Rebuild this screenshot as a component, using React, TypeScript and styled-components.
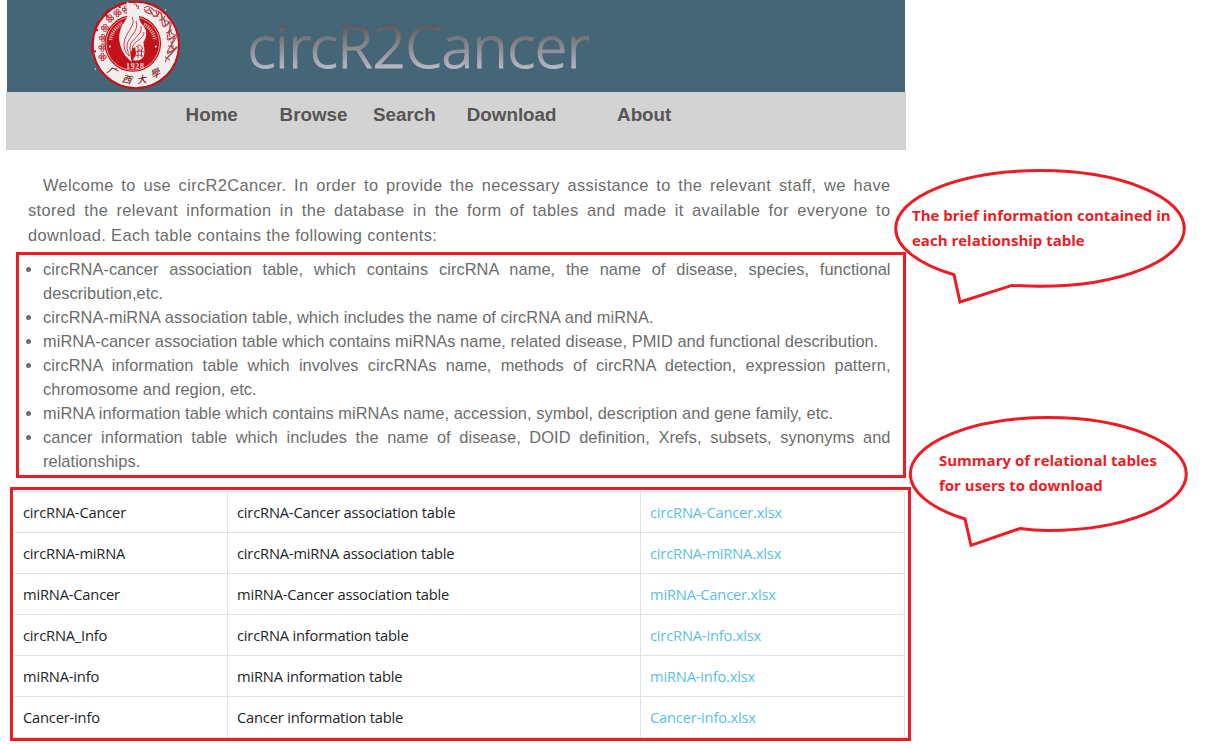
import React from "react";
import styled, { createGlobalStyle } from "styled-components";

const RED = "#ed1c24";

const GlobalStyle = createGlobalStyle`
  body {
    margin: 0;
    background: #fff;
    overflow: hidden;
  }
`;

const Page = styled.div`
  position: relative;
  box-sizing: border-box;
  width: 1207px;
  height: 744px;
  padding-left: 6px;
  background: #fff;
  overflow: hidden;
`;

const Content = styled.main`
  display: flex;
  flex-direction: column;
  width: 900px;
`;

const Banner = styled.header`
  box-sizing: border-box;
  display: flex;
  height: 92px;
  margin: 0 1px;
  padding-left: 82px;
  background: #446676;
`;

const Seal = styled.svg`
  flex: none;
  width: 96px;
  height: 92px;
`;

const SiteTitle = styled.h1`
  margin: 0 0 0 62.5px;
  height: 92px;
  font: 300 59px/90px "Noto Sans", "Open Sans", sans-serif;
  letter-spacing: -0.55px;
  white-space: nowrap;
  color: transparent;
  -webkit-text-stroke: 1px transparent;
  background: linear-gradient(#555255 22px, #bcbcc6 70px);
  background-clip: text;
  -webkit-background-clip: text;
`;

const Nav = styled.nav`
  box-sizing: border-box;
  display: flex;
  height: 58px;
  padding: 11px 0 0 179.6px;
  background: #d3d3d3;
`;

const NavItem = styled.a<{ $width: number }>`
  width: ${(p) => p.$width}px;
  font: bold 18.8px/24px "Liberation Sans", Arial, sans-serif;
  color: #575555;
`;

const Intro = styled.p`
  margin: 23px 15.5px 4px 22px;
  font: 16.4px/25px "Liberation Sans", Arial, sans-serif;
  letter-spacing: 0.38px;
  text-align: justify;
  text-indent: 15px;
  color: #6c6c6c;
`;

const DescriptionFrame = styled.section`
  margin-left: 10px;
  padding: 2px 12.5px 2px 24px;
  border: 3px solid ${RED};
`;

const TableList = styled.ul`
  margin: 0;
  padding: 0;
  list-style: none;
`;

const TableItem = styled.li`
  position: relative;
  font: 16.4px/24px "Liberation Sans", Arial, sans-serif;
  letter-spacing: 0.05px;
  text-align: justify;
  color: #6c6c6c;

  &::before {
    content: "";
    position: absolute;
    left: -17px;
    top: 10px;
    width: 5px;
    height: 5px;
    border-radius: 50%;
    background: #6c6c6c;
  }
`;

const DownloadFrame = styled.section`
  width: 894px;
  margin: 9px 0 0 4px;
  padding: 1px 0 0 1px;
  border: 3px solid ${RED};
`;

const DownloadTable = styled.div`
  width: 891px;
  border-top: 1px solid #dee2e6;
`;

const Row = styled.div`
  display: grid;
  grid-template-columns: 214px 413px 264px;
`;

const Cell = styled.div`
  box-sizing: border-box;
  height: 41px;
  padding: 0 9px;
  border-right: 1px solid #dee2e6;
  border-bottom: 1px solid #dee2e6;
  font: 14.7px/41px "Open Sans", "Noto Sans", sans-serif;
  letter-spacing: -0.19px;
  white-space: nowrap;
  color: #212529;
`;

const FileLink = styled.a`
  color: #5bc0de;
`;

const Callout = styled.aside<{ $left: number; $top: number }>`
  position: absolute;
  left: ${(p) => p.$left}px;
  top: ${(p) => p.$top}px;
  width: 300px;
  height: 140px;
`;

const Bubble = styled.svg`
  position: absolute;
  inset: 0;
  fill: none;
  stroke: ${RED};
  stroke-width: 3px;
`;

const CalloutText = styled.p<{ $indent: number }>`
  position: relative;
  margin: 0;
  padding: 38px 0 0 ${(p) => p.$indent}px;
  font: bold 15px/25px "Open Sans", "Noto Sans", sans-serif;
  white-space: nowrap;
  color: ${RED};
`;

const navItems = [
  { label: "Home", width: 94 },
  { label: "Browse", width: 93.5 },
  { label: "Search", width: 93.7 },
  { label: "Download", width: 150.3 },
  { label: "About", width: 90 },
];

const descriptions = [
  "circRNA-cancer association table, which contains circRNA name, the name of disease, species, functional describution,etc.",
  "circRNA-miRNA association table, which includes the name of circRNA and miRNA.",
  "miRNA-cancer association table which contains miRNAs name, related disease, PMID and functional describution.",
  "circRNA information table which involves circRNAs name, methods of circRNA detection, expression pattern, chromosome and region, etc.",
  "miRNA information table which contains miRNAs name, accession, symbol, description and gene family, etc.",
  "cancer information table which includes the name of disease, DOID definition, Xrefs, subsets, synonyms and relationships.",
];

const downloads = [
  ["circRNA-Cancer", "circRNA-Cancer association table", "circRNA-Cancer.xlsx"],
  ["circRNA-miRNA", "circRNA-miRNA association table", "circRNA-miRNA.xlsx"],
  ["miRNA-Cancer", "miRNA-Cancer association table", "miRNA-Cancer.xlsx"],
  ["circRNA_Info", "circRNA information table", "circRNA-info.xlsx"],
  ["miRNA-info", "miRNA information table", "miRNA-info.xlsx"],
  ["Cancer-info", "Cancer information table", "Cancer-info.xlsx"],
];

const flowers = [
  [13.5, 57], [13.5, 47.5], [14, 38], [16, 28], [21, 18.5], [28.5, 13], [37, 9.5], [46, 7.5],
];

const sealCharacters = [
  { char: "广", x: 24.5, y: 71, turn: 28 },
  { char: "西", x: 39, y: 79, turn: 12 },
  { char: "大", x: 53.5, y: 79, turn: -10 },
  { char: "學", x: 67, y: 72.5, turn: -28 },
];

function UniversitySeal() {
  const red = "#c4121a";
  return (
    <Seal viewBox="0 0 96 92">
      <circle cx="46.8" cy="45" r="44.3" fill={red} />
      <circle cx="46.8" cy="45" r="42.2" fill="#f3eeee" />
      <path d="M35 3 30 5l1 3M20 9l-4 5 3 3M9 22l-3 7 3 1.5M4.5 37l-1.5 14 4 .5" fill="none" stroke={red} strokeWidth="2" />
      {flowers.map(([x, y]) => (
        <g key={`${x}-${y}`} transform={`translate(${x} ${y})`} fill="none" stroke="#c2454b" strokeWidth="1.1">
          <circle cx="0" cy="-2.3" r="1.4" />
          <circle cx="0" cy="2.3" r="1.4" />
          <circle cx="-2.3" cy="0" r="1.4" />
          <circle cx="2.3" cy="0" r="1.4" />
        </g>
      ))}
      <g fill="none" stroke="#b9474b" strokeWidth="1.1">
        <path d="M55 8q4-3 7 0t6 3 5 5 5 5 3 6 3 7 0 7 0 7-3 7-4 7" />
        <path d="M56 12q5-5 7 1t6 1 4 6 6 4 1 7 4 6-1 7 1 6-5 7" />
        <path d="M55 9q2 5 8 5M64 16q5 2 6-4M70 20q5 0 6-4M74 26q4 1 6-5M77 33q4-1 6-3M79 39l6-1M79 46l6 0M78 51l6 2M76 57l5 3" />
        <path d="M60 8l3 6M67 11l2 6M75 20l2 6M80 30l1 7M82 41l1 8" />
      </g>
      <circle cx="43.8" cy="43.5" r="28.3" fill={red} />
      <circle cx="43.8" cy="43.5" r="26.7" fill="none" stroke="#efd2d3" strokeWidth=".7" />
      <g fill="none" stroke="#e3a3a5" strokeWidth="3.6" strokeDasharray="1.3 .9">
        <path d="M21.5 40A22.5 22.5 0 0 1 34 23" />
        <path d="M55 24A22.5 22.5 0 0 1 66 40" />
      </g>
      <g fill="#f3eeee">
        <circle cx="20.8" cy="46.5" r="1" />
        <circle cx="66.8" cy="46.5" r="1" />
        <path d="M38 2C36 10 41 15 36 21C31 28 29 35 31 44C33 53 38 58 43 62C41 56 41 52 44 48L50 46C56 42 58 37 57 31C56 26 51 24 50 18C50 13 49 8 46 5Z" />
        <path d="M46 45l8-4c1 5 2 9 1 15q-4 6-11 4l3-6z" />
      </g>
      <g fill="none" stroke={red} strokeWidth=".8">
        <path d="M43 17c5 9-8 16-8 27 0 6 2 9 5 12M47 21c4 11-9 16-9 25 0 4 1 7 3 10M52 26c2 10-11 13-11 21 0 3 0 5 1 7M55 32c0 8-11 8-12 17" />
        <path d="M47 47q4-4 6 0t-4 3M46 52q4-2 9 0M46 56q4-2 8 0M49 46v12M52.5 49v8" />
      </g>
      <text x="46.3" y="69" textAnchor="middle" fontFamily="Liberation Serif, serif" fontSize="8" fontWeight="bold" letterSpacing=".6" fill="#f6dede">1928</text>
      {sealCharacters.map(({ char, x, y, turn }) => (
        <text key={char} transform={`translate(${x} ${y}) rotate(${turn}) skewX(-14)`} textAnchor="middle" dominantBaseline="central" fontFamily="Noto Sans CJK SC, sans-serif" fontSize="9.5" fontWeight="500" fill="#7e1f22">
          {char}
        </text>
      ))}
      <circle cx="6.3" cy="69" r=".8" fill="#e6eaec" />
      <circle cx="76.3" cy="10" r=".8" fill="#e6eaec" />
    </Seal>
  );
}

export default function App() {
  return (
    <Page>
      <GlobalStyle />
      <Content>
        <Banner>
          <UniversitySeal />
          <SiteTitle>circR2Cancer</SiteTitle>
        </Banner>
        <Nav>
          {navItems.map((item) => (
            <NavItem key={item.label} $width={item.width}>{item.label}</NavItem>
          ))}
        </Nav>
        <Intro>
          Welcome to use circR2Cancer. In order to provide the necessary assistance to the relevant staff, we have
          stored the relevant information in the database in the form of tables and made it available for everyone to
          download. Each table contains the following contents:
        </Intro>
        <DescriptionFrame>
          <TableList>
            {descriptions.map((text) => (
              <TableItem key={text}>{text}</TableItem>
            ))}
          </TableList>
        </DescriptionFrame>
        <DownloadFrame>
          <DownloadTable>
            {downloads.map(([name, summary, file]) => (
              <Row key={name}>
                <Cell>{name}</Cell>
                <Cell>{summary}</Cell>
                <Cell><FileLink>{file}</FileLink></Cell>
              </Row>
            ))}
          </DownloadTable>
        </DownloadFrame>
      </Content>
      <Callout $left={890} $top={165}>
        <Bubble width="300" height="140" viewBox="890 165 300 140">
          <path d="M954 274.8A144.3 57.8 0 0 1 895.7 228.4A144.3 57.8 0 0 1 1040 170.6A144.3 57.8 0 0 1 1184.3 228.4A144.3 57.8 0 0 1 1040 286.2Q1026 286.2 1012 285.4L960 302Z" />
        </Bubble>
        <CalloutText $indent={22}>
          The brief information contained in
          <br />
          each relationship table
        </CalloutText>
      </Callout>
      <Callout $left={890} $top={410}>
        <Bubble width="300" height="140" viewBox="890 410 300 140">
          <path d="M965 519A138 56.5 0 0 1 910.3 474A138 56.5 0 0 1 1048.3 417.5A138 56.5 0 0 1 1186.3 474A138 56.5 0 0 1 1048.3 530.5Q1034 530.5 1020 528.5L971 545.3Z" />
        </Bubble>
        <CalloutText $indent={49}>
          Summary of relational tables
          <br />
          for users to download
        </CalloutText>
      </Callout>
    </Page>
  );
}
